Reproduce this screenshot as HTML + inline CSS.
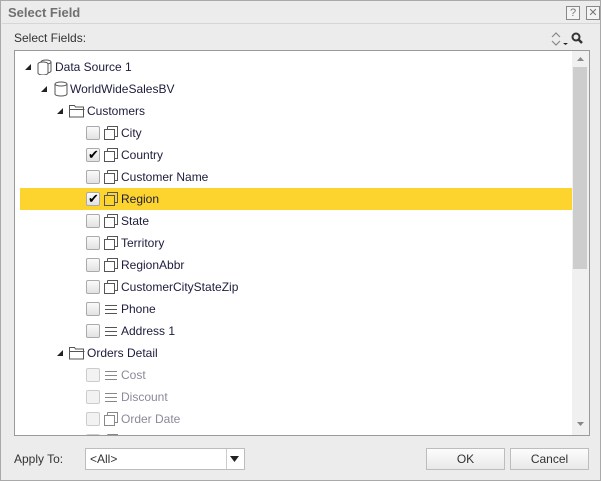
<!DOCTYPE html>
<html><head><style>
*{margin:0;padding:0;box-sizing:border-box}
body{width:601px;height:481px;background:#fff;font-family:"Liberation Sans",Tahoma,sans-serif;font-size:12px;color:#1c1c3c;overflow:hidden;position:relative}
.dlg{position:absolute;left:0;top:0;width:601px;height:481px;background:#ececec;border:1px solid #a9a9a9}
.abs{position:absolute}
.title{left:7px;top:4px;font-weight:bold;font-size:13px;color:#707070}
.sep{left:1px;top:22px;width:598px;height:1px;background:#d6d6d6}
.tb{width:14px;height:14px;border:1px solid #888;color:#777;font-size:11px;line-height:12px;text-align:center;background:#f4f4f4}
.tree{left:13px;top:49px;width:576px;height:386px;background:#fff;border:1px solid #9a9a9a;overflow:hidden}
.row{position:absolute;left:0;height:22px;width:557px;line-height:22px;white-space:nowrap}
.hl{background:#fdd32d;left:5px;width:552px}
.tri{position:absolute;top:8px;width:0;height:0;border-left:6px solid transparent;border-bottom:6px solid #222}
.cb{position:absolute;top:4px;width:14px;height:14px;border:1px solid #aaa;border-radius:2px;background:linear-gradient(#fafafa,#e2e2e2)}
.cb.dis{border-color:#ccc;background:#f2f2f2}
.ck{position:absolute;left:1px;top:-5px;font-size:13px;color:#000}
.txt{position:absolute;top:0}
.gray{color:#8a8a9a}
.fld{position:absolute;top:4px;width:14px;height:14px}
.sb{left:557px;top:0;width:17px;height:384px;background:#f0f0f0}
.btn{height:22px;border:1px solid #bdbdbd;background:linear-gradient(#fdfdfd,#e9e9e9);text-align:center;line-height:20px;color:#333}
</style></head><body>
<div class="dlg">
<div class="abs title">Select Field</div>
<div class="abs tb" style="left:565px;top:5px">?</div>
<div class="abs tb" style="left:585px;top:5px">✕</div>
<div class="abs sep"></div>
<div class="abs" style="left:13px;top:30px;color:#333">Select Fields:</div>
<svg class="abs" style="left:548px;top:30px" width="40" height="16"><path d="M3 6l4-4 4 4M3 10l4 4 4-4" fill="none" stroke="#888" stroke-width="1.2"/><path d="M14 12h5l-2.5 2z" fill="#222"/><circle cx="27" cy="6" r="3.5" fill="none" stroke="#333" stroke-width="2"/><path d="M29.5 8.5l3.5 3.5" stroke="#333" stroke-width="2.5"/></svg>
<div class="abs tree">
<div class="abs sb"><svg width="17" height="384"><path d="M5 10h7l-3.5-4z" fill="#888"/><rect x="1" y="16" width="14" height="202" fill="#cdcdcd"/><path d="M5 371h7l-3.5 4z" fill="#888"/></svg></div>
<div id="rows"></div>
</div>
<div class="abs" style="left:13px;top:451px;color:#333">Apply To:</div>
<div class="abs" style="left:84px;top:447px;width:160px;height:22px;border:1px solid #bdbdbd;background:#fff"><span style="position:absolute;left:4px;top:3px;color:#333">&lt;All&gt;</span><div style="position:absolute;left:140px;top:0;width:1px;height:20px;background:#ccc"></div><svg style="position:absolute;left:144px;top:6px" width="10" height="8"><path d="M0 1h9l-4.5 6z" fill="#222"/></svg></div>
<div class="abs btn" style="left:425px;top:447px;width:79px">OK</div>
<div class="abs btn" style="left:509px;top:447px;width:79px">Cancel</div>
</div>
<script>
var F='<svg class="fld" viewBox="0 0 14 14"><path d="M3.5 0.5h10v10h-3M0.5 3.5h10v10h-10zM3.5 0.5v3" fill="none" stroke="#555"/></svg>';
var FG='<svg class="fld" viewBox="0 0 14 14"><path d="M3.5 0.5h10v10h-3M0.5 3.5h10v10h-10zM3.5 0.5v3" fill="none" stroke="#888"/></svg>';
var L='<svg class="fld" viewBox="0 0 14 14"><path d="M1 3.5h12M1 7.5h12M1 11.5h12" stroke="#555"/></svg>';
var LG='<svg class="fld" viewBox="0 0 14 14"><path d="M1 3.5h12M1 7.5h12M1 11.5h12" stroke="#888"/></svg>';
var DB='<svg class="fld" style="width:16px;height:16px;top:3px" viewBox="0 0 16 16"><ellipse cx="9" cy="3" rx="5" ry="2" fill="none" stroke="#555"/><path d="M4 3v9a5 2 0 0 0 10 0V3" fill="none" stroke="#555"/><ellipse cx="6" cy="5" rx="5" ry="2" fill="#fff" stroke="#555"/><path d="M1 5v9a5 2 0 0 0 10 0V5" fill="#fff" stroke="#555"/></svg>';
var DB1='<svg class="fld" style="width:14px;height:16px;top:3px" viewBox="0 0 14 16"><ellipse cx="7" cy="3" rx="6" ry="2" fill="none" stroke="#555"/><path d="M1 3v10a6 2 0 0 0 12 0V3" fill="none" stroke="#555"/></svg>';
var FO='<svg class="fld" style="width:16px" viewBox="0 0 16 14"><path d="M0.5 1.5h5l1 1.5h8v10h-14z M0.5 5.5h15" fill="none" stroke="#555"/></svg>';
// tree rows: [type, triX, icon, iconX, textX, text, checked, hl]
var rows=[
['t',10,DB,22,40,'Data Source 1'],
['t',26,DB1,39,55,'WorldWideSalesBV'],
['t',42,FO,54,72,'Customers'],
['c',0,F,0,0,'City'],['c',1,F,0,0,'Country'],['c',0,F,0,0,'Customer Name'],['c',1,F,0,0,'Region',1],['c',0,F,0,0,'State'],['c',0,F,0,0,'Territory'],['c',0,F,0,0,'RegionAbbr'],['c',0,F,0,0,'CustomerCityStateZip'],['c',0,L,0,0,'Phone'],['c',0,L,0,0,'Address 1'],
['t',42,FO,54,72,'Orders Detail'],
['g',0,LG,0,0,'Cost'],['g',0,LG,0,0,'Discount'],['g',0,FG,0,0,'Order Date'],['g',0,FG,0,0,'']
];
var h='';rows.forEach(function(r,i){var y=5+i*22;var hl=r[6];var o=hl?5:0;
var s='<div class="row'+(hl?' hl':'')+'" style="top:'+y+'px">';
if(r[0]=='t'){s+='<div class="tri" style="left:'+r[1]+'px"></div><span style="position:absolute;left:'+r[3]+'px;top:0">'+r[2]+'</span><span class="txt" style="left:'+r[4]+'px">'+r[5]+'</span>';}
else{s+='<div class="cb'+(r[0]=='g'?' dis':'')+'" style="left:'+(71-o)+'px">'+(r[1]?'<span class="ck">✔</span>':'')+'</div><span style="position:absolute;left:'+(89-o)+'px;top:0">'+r[2]+'</span><span class="txt'+(r[0]=='g'?' gray':'')+'" style="left:'+(106-o)+'px">'+r[5]+'</span>';}
h+=s+'</div>';});
document.getElementById('rows').innerHTML=h;
</script>
</body></html>
